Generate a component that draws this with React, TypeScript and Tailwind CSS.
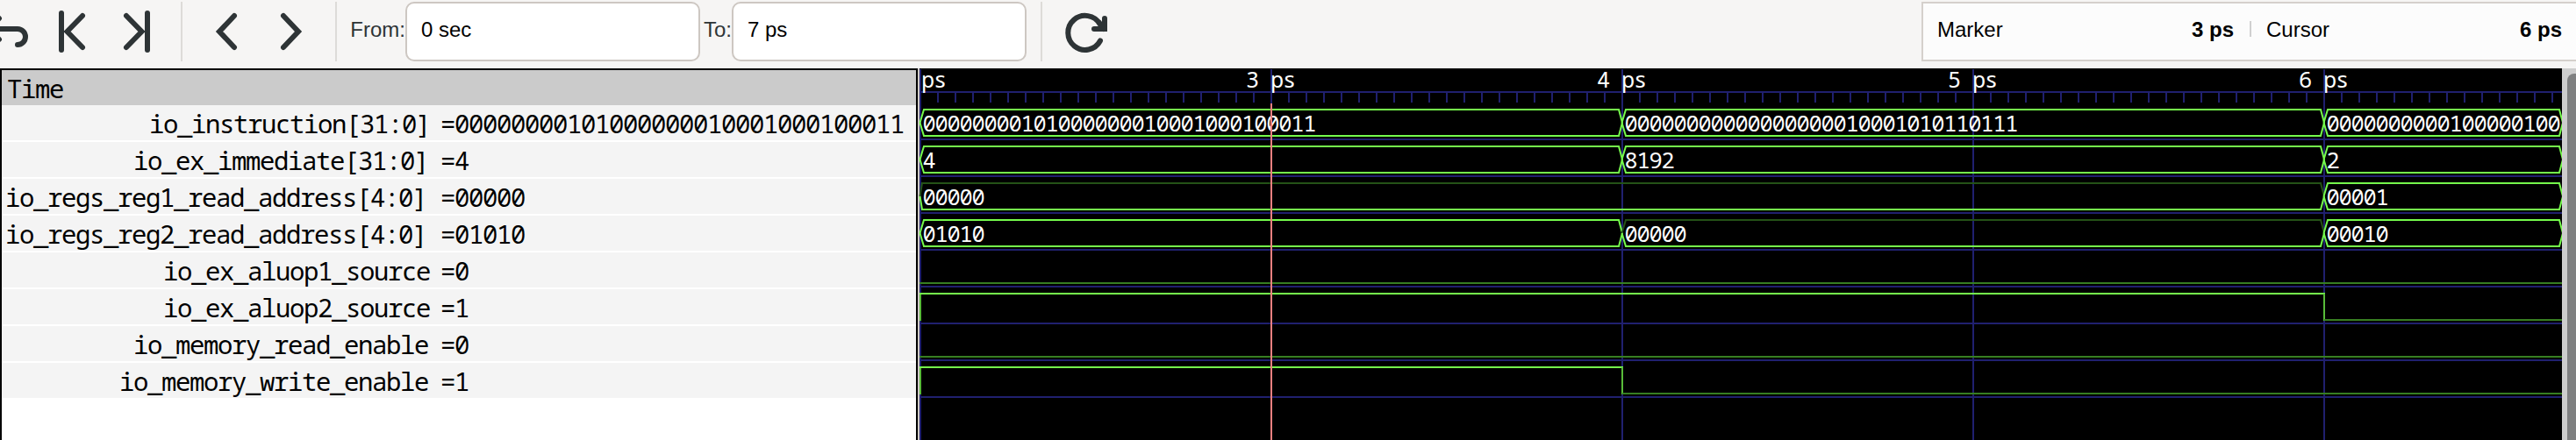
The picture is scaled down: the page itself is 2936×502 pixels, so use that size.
import type { ReactNode } from 'react';

const MONO = "font-['Noto_Sans_Mono','DejaVu_Sans_Mono',monospace]";

type Segment = { from: number; to: number; value: string };
type Signal = {
  name: string;
  value: string;
  labelPad: string;
  bus?: Segment[];
  level?: { from: number; to: number; high: boolean }[];
};

// Horizontal positions inside the wave area: one picosecond is 400px wide.
const END = 1873;

const signals: Signal[] = [
  {
    name: 'io_instruction[31:0]',
    value: '00000000101000000010001000100011',
    labelPad: 'pr-3',
    bus: [
      { from: 1, to: 801, value: '00000000101000000010001000100011' },
      { from: 801, to: 1601, value: '00000000000000000010001010110111' },
      { from: 1601, to: END, value: '0000000000100000100' },
    ],
  },
  {
    name: 'io_ex_immediate[31:0]',
    value: '4',
    labelPad: 'pr-3.5',
    bus: [
      { from: 1, to: 801, value: '4' },
      { from: 801, to: 1601, value: '8192' },
      { from: 1601, to: END, value: '2' },
    ],
  },
  {
    name: 'io_regs_reg1_read_address[4:0]',
    value: '00000',
    labelPad: 'pr-4',
    bus: [
      { from: 1, to: 1601, value: '00000' },
      { from: 1601, to: END, value: '00001' },
    ],
  },
  {
    name: 'io_regs_reg2_read_address[4:0]',
    value: '01010',
    labelPad: 'pr-4',
    bus: [
      { from: 1, to: 801, value: '01010' },
      { from: 801, to: 1601, value: '00000' },
      { from: 1601, to: END, value: '00010' },
    ],
  },
  { name: 'io_ex_aluop1_source', value: '0', labelPad: 'pr-3', level: [{ from: 0, to: END, high: false }] },
  {
    name: 'io_ex_aluop2_source',
    value: '1',
    labelPad: 'pr-3',
    level: [
      { from: 0, to: 1601, high: true },
      { from: 1601, to: END, high: false },
    ],
  },
  { name: 'io_memory_read_enable', value: '0', labelPad: 'pr-3.5', level: [{ from: 0, to: END, high: false }] },
  {
    name: 'io_memory_write_enable',
    value: '1',
    labelPad: 'pr-3.5',
    level: [
      { from: 0, to: 801, high: true },
      { from: 801, to: END, high: false },
    ],
  },
];

function ToolButton({ children }: { children: ReactNode }) {
  return (
    <button className="h-[72px] w-[74px] shrink-0">
      <svg viewBox="0 0 74 72" className="block h-[72px] w-[74px] fill-none stroke-[#2e3436] stroke-[6]" strokeLinecap="round">
        {children}
      </svg>
    </button>
  );
}

function Divider() {
  return <div className="h-[68px] w-0.5 shrink-0 bg-[#dddbd8]" />;
}

function Entry({ value }: { value: string }) {
  return (
    <div className="flex h-[68px] w-[336px] shrink-0 items-center rounded-[10px] border-2 border-[#cdc7c2] bg-white pb-1 pl-4 text-black">
      {value}
    </div>
  );
}

function Toolbar() {
  return (
    <div className="flex h-[78px] shrink-0 items-start bg-[#f6f5f4] font-['Liberation_Sans',sans-serif] text-2xl text-[#2e3436]">
      <svg viewBox="0 0 45 72" className="block h-[72px] w-[45px] shrink-0 fill-none stroke-[#2e3436] stroke-[6]" strokeLinecap="round">
        <path d="M-14 33H20a9 9 0 0 1 0 18" />
        <path d="M-1 21L-13 33L-1 45" />
      </svg>
      <ToolButton>
        <path d="M25 15V57" />
        <path d="M49 18L31.5 36L49 54" />
      </ToolButton>
      <ToolButton>
        <path d="M49 15V57" />
        <path d="M25 18L42.5 36L25 54" />
      </ToolButton>
      <div className="flex items-center px-[13px] pt-0.5">
        <Divider />
      </div>
      <ToolButton>
        <path d="M46 18L29 36L46 54" />
      </ToolButton>
      <ToolButton>
        <path d="M28 18L45 36L28 54" />
      </ToolButton>
      <div className="flex items-center pt-0.5 pl-[13px]">
        <Divider />
        <span className="w-[78px] shrink-0 pb-1 text-right">From:</span>
        <Entry value="0 sec" />
        <span className="w-9 shrink-0 pb-1 text-right">To:</span>
        <Entry value="7 ps" />
        <div className="w-4" />
        <Divider />
        <div className="w-3" />
      </div>
      <ToolButton>
        <path d="M54 46.5A19.5 19.5 0 1 1 53.6 27.5" />
        <path d="M53 26L58 33" />
        <path d="M59 21V33H47" />
        <path d="M56 30H62V36H56Z" className="fill-[#2e3436] stroke-none" />
      </ToolButton>
      <div className="mt-0.5 ml-auto flex h-[68px] w-[746px] shrink-0 items-center border-2 border-r-0 border-[#d5d0cc] bg-[#fcfcfc] pr-4 pb-1 pl-4 text-black">
        <span className="w-72">Marker</span>
        <span className="w-[50px] text-right font-bold">3 ps</span>
        <span className="mb-0.5 ml-[18px] h-[18px] w-0.5 bg-[#d0d0d0]" />
        <span className="ml-[17px] flex-1">Cursor</span>
        <span className="font-bold">6 ps</span>
      </div>
    </div>
  );
}

function SignalList() {
  return (
    <div className={`flex w-[1046px] shrink-0 flex-col border-t-2 border-r-2 border-l-2 border-black bg-white text-[29px] tracking-[-1.4px] text-black ${MONO}`}>
      <div className="h-10 bg-[#cbcbcb] pl-1.5 leading-[41px] whitespace-pre">Time</div>
      <div className="flex flex-col gap-0.5">
        {signals.map((s) => (
          <div key={s.name} className="flex h-10 bg-[#f4f4f4] leading-[41px] whitespace-pre">
            <span className={`w-[500px] shrink-0 text-right ${s.labelPad}`}>{s.name}</span>
            <span>={s.value}</span>
          </div>
        ))}
      </div>
    </div>
  );
}

function BusTrace({ segments, top }: { segments: Segment[]; top: number }) {
  const high = top + 5;
  const mid = top + 20;
  const low = top + 35;
  return (
    <g>
      {segments.map((seg) => {
        const zero = !/[1-9]/.test(seg.value);
        const a = seg.from + (zero && seg.from === 1 ? 2 : 4);
        const b = seg.to - 4;
        return (
          <g key={seg.from} className="fill-none stroke-2">
            <path className={zero ? 'stroke-[#245217]' : 'stroke-[#75fb4c]'} d={`M${seg.from - 0.5} ${mid}L${a} ${high}H${b}L${seg.to} ${mid}`} />
            <path className="stroke-[#75fb4c]" d={`M${seg.from - 0.5} ${mid}L${a} ${low}H${b}L${seg.to} ${mid}`} />
            <text x={seg.from + 2.5} y={top + 30} className="fill-white stroke-none">
              {seg.value}
            </text>
          </g>
        );
      })}
    </g>
  );
}

function LevelTrace({ parts, top }: { parts: NonNullable<Signal['level']>; top: number }) {
  return (
    <g className="stroke-2">
      {parts.map((p) => {
        const y = top + (p.high ? 5 : 35);
        return (
          <g key={p.from}>
            {(p.high || p.from > 0) && (
              <path className="stroke-[#58bb39]" d={`M${Math.max(p.from, 1)} ${top + 5}V${top + 36}`} />
            )}
            <path className={p.high ? 'stroke-[#75fb4c]' : 'stroke-[#377e22]'} d={`M${p.from} ${y}H${p.high ? p.to + 1 : p.to}`} />
          </g>
        );
      })}
    </g>
  );
}

function Waves() {
  const ticks = Array.from({ length: 93 }, (_, i) => 21 + i * 20);
  const majors = [1, 401, 801, 1201, 1601];
  return (
    <svg viewBox="0 0 1872 424" className={`block h-[424px] w-[1872px] shrink-0 overflow-visible bg-black text-[25.4px] tracking-[-1.24px] ${MONO}`}>
      <g className="stroke-[#20206f] stroke-2">
        <path d="M0 27H1872" />
        {ticks.map((x) => (
          <path key={x} d={`M${x} 28V39`} />
        ))}
        {majors.map((x) => (
          <path key={x} d={`M${x} 1V424`} />
        ))}
        {signals.map((s, i) => (
          <path key={s.name} d={`M0 ${81 + i * 42}H1872`} />
        ))}
      </g>
      <g className="fill-white">
        <text x="2" y="22">ps</text>
        {['3', '4', '5', '6'].map((n, i) => (
          <text key={n} x={372 + i * 400} y="22">
            {n} ps
          </text>
        ))}
      </g>
      {signals.map((s, i) =>
        s.bus ? <BusTrace key={s.name} segments={s.bus} top={42 + i * 42} /> : <LevelTrace key={s.name} parts={s.level!} top={42 + i * 42} />,
      )}
      <path className="stroke-[#ee8080] stroke-2" d="M401 40V424" />
    </svg>
  );
}

export default function App() {
  return (
    <div className="flex h-[502px] w-[2936px] flex-col overflow-hidden bg-[#f6f5f4]">
      <Toolbar />
      <div className="flex flex-1">
        <SignalList />
        <div className="w-0.5 shrink-0 bg-[#d0cbc7]" />
        <Waves />
        <div className="flex w-4 shrink-0 items-stretch bg-[#cdcdcd] pt-1.5 pl-1.5">
          <div className="w-2.5 rounded-tl-lg bg-[#7f8081]" />
        </div>
      </div>
    </div>
  );
}
